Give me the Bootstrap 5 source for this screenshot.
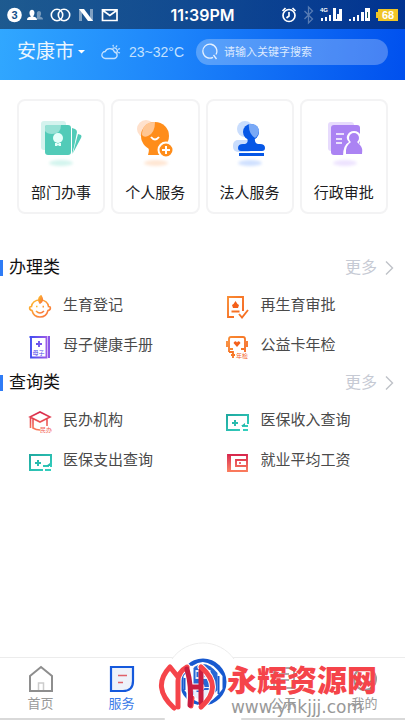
<!DOCTYPE html>
<html lang="zh-CN">
<head>
<meta charset="utf-8">
<meta name="viewport" content="width=device-width, initial-scale=1">
<title>服务</title>
<link href="https://cdn.jsdelivr.net/npm/bootstrap@5.3.0/dist/css/bootstrap.min.css" rel="stylesheet">
<style>
  body { font-family: "Liberation Sans", "Noto Sans CJK SC", sans-serif; background: #fff; color: #1c1c1e; }
  a, a:hover { color: inherit; text-decoration: none; }
  svg { display: block; flex-shrink: 0; }
  .hero { background: linear-gradient(97deg, #31a8ff 0%, #1c83fa 45%, #0050ee 100%); color: #fff; }
  .status-strip { height: 29px; padding: 0 6px 0 7px; background: linear-gradient(90deg, rgba(22,60,100,.72), rgba(0,34,96,.66)); }
  .clock { font-family: Inter, sans-serif; font-size: 16px; font-weight: 600; line-height: 20px; }
  .search-line { height: 51px; padding: 0 17px 6px; }
  .city { font-size: 19px; line-height: 28px; color: #e9f5ff; }
  .weather { font-size: 14px; line-height: 20px; color: #c3e1ff; }
  .search-pill { height: 26px; background: rgba(255,255,255,.27); border-radius: 13px; padding: 0 8px 0 6px; }
  .search-pill input { font-size: 11px; line-height: 16px; color: #fff; outline: 0; min-width: 0; }
  .search-pill input::placeholder { color: #dceaff; opacity: 1; }
  .tiles { padding: 19px 17px 0; gap: 6px; }
  .tile { flex: 1 1 0; height: 115px; border: 2px solid #f3f3f4; border-radius: 8px; font-size: 15px; line-height: 22px; padding-top: 11px; gap: 10px; }
  .groups { padding-top: 36px; }
  .group-head { height: 35px; padding-right: 11px; gap: 6px; }
  .group-head h2 { font-size: 17px; line-height: 24px; font-weight: 400; color: #111; }
  .marker { width: 3px; height: 16px; background: #2f7cf6; }
  .more { font-size: 16px; line-height: 24px; color: #c6cad4; }
  .entries { display: grid; grid-template-columns: 22fr 20fr; padding-left: 28px; }
  .entry { height: 40px; gap: 11px; font-size: 15px; line-height: 22px; color: #4a4a4a; }
  .entry svg { margin-top: 4px; }
  .tabs-bar { border-top: 1px solid #ececec; border-bottom: 2px solid #d9d9d9; background: #fff; }
  .tab-item { flex: 1 1 0; height: 60px; padding-top: 7px; font-size: 13px; line-height: 18px; gap: 1px; color: #999; }
  .tab-item.current { color: #3b7ce8; }
  .hub { position: absolute; left: 50%; bottom: -2px; transform: translateX(-50%); }
  .stamp { position: absolute; left: 39%; bottom: 3px; pointer-events: none; }
  .stamp-name { font-size: 30px; line-height: 36px; font-weight: 900; color: #f5444a; }
  .stamp-url { font-family: "DejaVu Sans", sans-serif; font-size: 17px; line-height: 16px; color: #999; }
</style>
<script src="https://cdn.jsdelivr.net/npm/bootstrap@5.3.0/dist/js/bootstrap.bundle.min.js"></script>
</head>
<body>
<svg width="0" height="0" class="position-absolute" aria-hidden="true">
  <defs>
    <linearGradient id="gOrange" x1="0" y1="0" x2="1" y2="1"><stop offset="0" stop-color="#ffbc2e"/><stop offset="1" stop-color="#f9703e"/></linearGradient>
    <linearGradient id="gViolet" x1="0" y1="0" x2="1" y2="0"><stop offset="0" stop-color="#3c4cf0"/><stop offset="1" stop-color="#9a5ae8"/></linearGradient>
    <linearGradient id="gFire" x1="0" y1="0" x2="1" y2="1"><stop offset="0" stop-color="#f98b32"/><stop offset="1" stop-color="#f4601a"/></linearGradient>
    <linearGradient id="gRed" x1="0" y1="0" x2="0" y2="1"><stop offset="0" stop-color="#d8284c"/><stop offset="1" stop-color="#fa7a5c"/></linearGradient>
    <linearGradient id="gTeal" x1="0" y1="0" x2="1" y2="1"><stop offset="0" stop-color="#1fa9a0"/><stop offset="1" stop-color="#35d0bf"/></linearGradient>
    <filter id="soft" x="-30%" y="-80%" width="160%" height="260%"><feGaussianBlur stdDeviation="1.6"/></filter>
  </defs>
</svg>
<div class="min-vh-100 d-flex flex-column">
  <header class="hero">
    <div class="status-strip d-flex align-items-center justify-content-between position-relative">
      <svg width="114" height="20" viewBox="0 0 114 20" role="img" aria-label="通知">
        <circle cx="7.500" cy="10" r="7.300" fill="#fff"/><text x="7.500" y="14" text-anchor="middle" font-family="Liberation Sans" font-weight="700" font-size="11" fill="#14508c">3</text>
        <g fill="#fff"><path d="M20 15c0-2.400 1.500-2.800 4-3.400-2.400-2.500-1.800-6.800 1-6.800s3.400 4.300 1 6.800c2.500.6 4 1 4 3.400z"/><path opacity=".4" d="M30 14.500h6c0-2-1.400-2.400-3-2.900 1.700-2 1.500-5.600-1-5.600-1.400 0-2.200 1-2.200 2.500z"/></g>
        <g fill="none" stroke="#fff" stroke-width="1.600"><circle cx="50" cy="10" r="5.700"/><circle cx="57" cy="10" r="5.700"/></g>
        <path fill="#fff" opacity=".45" d="M72 4h3v12h-3zM83 4h3v12h-3z"/><path fill="#fff" d="M72 4h5l9 12h-5z"/>
        <path d="M95.500 4.800h14.500v10.700H95.500zM96 5.500l6.800 5 6.800-5" fill="none" stroke="#fff" stroke-width="1.700"/>
      </svg>
      <span class="clock position-absolute start-50 translate-middle-x">11:39PM</span>
      <svg width="118" height="20" viewBox="281 0 118 20" role="img" aria-label="电量 68">
        <g fill="none" stroke="#fff" stroke-width="1.700"><circle cx="289" cy="10.500" r="6"/><path d="M289 7v4l-2.500 2M282.500 6l3-3M292.500 3l3 3"/></g>
        <path d="M304.500 6l8 8-4 4V2l4 4-8 8" fill="none" stroke="#fff" stroke-opacity=".32" stroke-width="1.300"/>
        <text x="320" y="7" font-family="Liberation Sans" font-weight="700" font-size="6" fill="#fff">4G</text>
        <g fill="#fff"><path d="M321 13h2v3h-2zM325 12h2v4h-2zM329 10h2v6h-2zM333 3h3v13h-3zM337 9h2v7h-2zM339 4h3v12h-3zM336 14h4v2h-4z"/><path d="M349 14h2v2h-2zM353 12h2v4h-2zM357 10h2v6h-2zM361 7h3v9h-3zM365 3h5v13h-5z"/></g>
        <path d="M367.500 7v6" stroke="#155" stroke-width="1"/>
        <path d="M378 4h20v12h-20v-3h-2V7h2z" fill="#f0c526"/><text x="388" y="14" text-anchor="middle" font-family="Liberation Sans" font-weight="700" font-size="11" fill="#fff">68</text>
      </svg>
    </div>
    <div class="search-line d-flex align-items-center">
      <button type="button" class="btn p-0 border-0 city d-flex align-items-center">安康市<svg width="7" height="5" viewBox="0 0 7 5" class="ms-1"><path d="M0 1h7L3.500 4.500z" fill="#fff"/></svg></button>
      <svg width="20" height="16" viewBox="0 0 20 16" class="ms-3" fill="none" stroke="#c3e1ff" stroke-width="1.300"><path d="M4.500 14.500a3.500 3.500 0 0 1-.3-7A5 5 0 0 1 13.500 8a3.300 3.300 0 0 1-.2 6.500z"/><path d="M11.500 4.600a3 3 0 0 1 4.200 4.200M12 .8l.4 1.800M16 1.500l-1 1.700M19 4.500l-1.900.9M19 9l-1.800-.7"/></svg>
      <span class="weather ms-2 me-2">23~32°C</span>
      <form class="search-pill d-flex align-items-center flex-grow-1 ms-1" role="search">
        <svg width="18" height="18" viewBox="0 0 18 18" fill="none" stroke="#e4f0ff" stroke-width="1.300"><path d="M11 14.400A7 7 0 1 1 14 11.500M11.500 12l3 4"/></svg>
        <input type="search" class="border-0 bg-transparent p-0 ms-1 flex-grow-1" placeholder="请输入关键字搜索" aria-label="请输入关键字搜索">
      </form>
    </div>
  </header>
  <main class="flex-grow-1">
    <nav class="tiles d-flex" aria-label="服务">
      <a href="#" class="tile d-flex flex-column align-items-center">
        <svg width="50" height="60" viewBox="0 0 50 60"><ellipse cx="25" cy="51" rx="12" ry="3" fill="#d3f4ee" filter="url(#soft)"/><rect x="5" y="9" width="25" height="29" rx="3" fill="#d5f3ee"/><path d="M36 16l3 1q2 1 2 3l-3 15-2 7z" fill="#52cbb8"/><path d="M42 22l3 1q1 1 0 3l-8 15z" fill="#52cbb8"/><rect x="9" y="13" width="26" height="30" rx="3" fill="#52cbb8"/><path d="M10 13h15q0 9-9 9-5 0-7-3v-3q0-3 1-3z" fill="#97e1d5"/><circle cx="22" cy="26" r="5" fill="#e6fffa"/><path d="M19 31h2l1 1 1-1h2v3h-2l-1-1-1 1h-2z" fill="#e6fffa"/></svg>
        <span>部门办事</span></a>
      <a href="#" class="tile d-flex flex-column align-items-center">
        <svg width="50" height="60" viewBox="0 0 50 60"><ellipse cx="26" cy="51" rx="12" ry="3" fill="#ffe6d3" filter="url(#soft)"/><circle cx="16" cy="17" r="9" fill="#ffe1cc"/><circle cx="25" cy="24" r="14" fill="#ff8d1a"/><path d="M17 33q3 4 1 10h16V33z" fill="#ff8d1a"/><path d="M12 23q0-13 13-13 0 11-7 14-4 2-6-1z" fill="#ffc693"/><path d="M21 25q4 5 8 0" fill="none" stroke="#fff" stroke-width="2"/><circle cx="36" cy="38" r="7.500" fill="#ff8d1a" stroke="#fff" stroke-width="2"/><path d="M36 34v8M32 38h8" stroke="#fff" stroke-width="2"/></svg>
        <span>个人服务</span></a>
      <a href="#" class="tile d-flex flex-column align-items-center">
        <svg width="50" height="60" viewBox="0 0 50 60"><ellipse cx="25" cy="51" rx="12" ry="3" fill="#cfe0ff" filter="url(#soft)"/><circle cx="20" cy="17" r="8" fill="#c9ddfd"/><rect x="8" y="28" width="20" height="12" rx="5" fill="#c9ddfd"/><circle cx="26" cy="20" r="8" fill="#0657e6"/><path d="M22 25h8q-1 6 3 7h2q5 0 5 4 0 3-3 3H16q-3 0-3-3 0-4 5-4h2q4-1 2-7z" fill="#0657e6"/><path d="M14 41h25v3H14z" fill="#0657e6"/><path d="M24 12q8-1 10 6 0 5-4 8-7-5-6-14z" fill="#7aa9f6"/></svg>
        <span>法人服务</span></a>
      <a href="#" class="tile d-flex flex-column align-items-center">
        <svg width="50" height="60" viewBox="0 0 50 60"><ellipse cx="26" cy="51" rx="12" ry="3" fill="#ede3fe" filter="url(#soft)"/><rect x="9" y="10" width="26" height="29" rx="3" fill="#e7dbfd"/><rect x="12" y="13" width="29" height="30" rx="3" fill="#ab83f3"/><path d="M17 22h8M17 27h6M17 31h6" stroke="#fff" stroke-width="1.600"/><path d="M30 30q-3-3-2-6 2-5 7-5t7 5q0 4-2 7 4 3 4 13H24q0-11 6-14z" fill="#fff"/><circle cx="35" cy="26" r="5" fill="#ab83f3"/><path d="M32 30h6l3 3q3 3 2 9H27q-1-8 5-12z" fill="#ab83f3"/></svg>
        <span>行政审批</span></a>
    </nav>
    <div class="groups">
    <section>
      <div class="group-head d-flex align-items-center">
        <span class="marker"></span><h2 class="m-0 flex-grow-1">办理类</h2>
        <a href="#" class="more d-flex align-items-center">更多<svg width="9" height="16" viewBox="0 0 9 16" class="ms-2"><path d="M1 1.500l6.500 6.500L1 14.500" fill="none" stroke="#bfc2c8" stroke-width="1.400"/></svg></a>
      </div>
      <div class="entries">
        <a href="#" class="entry d-flex align-items-center"><svg width="24" height="24" viewBox="0 0 24 24" fill="none" stroke="url(#gOrange)" stroke-width="1.600"><path d="M12 5c-5 0-8 3-8.500 6.500C1 11 .8 15 4 15.500c1 4 4 6.500 8 6.500s7-2.500 8-6.500c3.200-.5 3-4.500.5-4C20 8 17 5 12 5z"/><path d="M13 1q-4 3-1 7 4-2 1-7z" fill="#f59b2a"/><path d="M8 11.500h1.500M14.500 11.600H16M8 16q4 4 8 0"/></svg>生育登记</a>
        <a href="#" class="entry d-flex align-items-center"><svg width="24" height="24" viewBox="0 0 24 24" fill="none" stroke="url(#gFire)" stroke-width="1.900"><path d="M9 22H3V2h15v14M6.500 16.500h8"/><path d="M14 19l3 3.500 6-7.500"/><path d="M10.500 6l2 3 1.500 1-1 3H8l-1-3 1.500-1z" fill="#f4601a" stroke="none"/></svg>再生育审批</a>
        <a href="#" class="entry d-flex align-items-center"><svg width="24" height="24" viewBox="0 0 24 24" fill="none" stroke="url(#gViolet)" stroke-width="1.900"><path d="M3 2h15.500v20.500H3zM1.500 2H4M11 6v6M8 9h6"/><path d="M20 1h2v22h-2z" fill="#8a57e8" stroke="none"/><text x="10.500" y="20" text-anchor="middle" font-family="Noto Sans CJK SC" font-size="6" fill="#5148ec" stroke="none">母子</text></svg>母子健康手册</a>
        <a href="#" class="entry d-flex align-items-center"><svg width="24" height="24" viewBox="0 0 24 24" fill="none" stroke="url(#gFire)" stroke-width="1.800"><path d="M4 17V4q0-2 2-2h12q2 0 2 2v12M2 6v6M22 6v6M4 17h4v2M20 14v3"/><path d="M12 12L8.500 8q1.500-3 3.500-.6 2-2.400 3.500.6z" fill="#f4601a" stroke="none"/><path d="M5 14h3M16 14h3M6 20h4M8 18v5"/><text x="17" y="23" text-anchor="middle" font-family="Noto Sans CJK SC" font-size="6" fill="#f4601a" stroke="none">年检</text></svg>公益卡年检</a>
      </div>
    </section>
    <section>
      <div class="group-head d-flex align-items-center">
        <span class="marker"></span><h2 class="m-0 flex-grow-1">查询类</h2>
        <a href="#" class="more d-flex align-items-center">更多<svg width="9" height="16" viewBox="0 0 9 16" class="ms-2"><path d="M1 1.500l6.500 6.500L1 14.500" fill="none" stroke="#bfc2c8" stroke-width="1.400"/></svg></a>
      </div>
      <div class="entries">
        <a href="#" class="entry d-flex align-items-center"><svg width="24" height="24" viewBox="0 0 24 24" fill="none" stroke="url(#gRed)" stroke-width="1.600"><path d="M2 7l10-5 10 5-10 5zM5 9v9q3 2 7 2M19 9v7M2.500 8v10"/><text x="18" y="22" text-anchor="middle" font-family="Noto Sans CJK SC" font-size="6" fill="#f25b50" stroke="none">民办</text></svg>民办机构</a>
        <a href="#" class="entry d-flex align-items-center"><svg width="24" height="24" viewBox="0 0 24 24" fill="none" stroke="url(#gTeal)" stroke-width="2"><path d="M15 20H2V5h21v9M10 10v6M7 13h6M17 16h6M18 20h5"/><path d="M16 16l4-3v3z" fill="#28b9ac" stroke="none"/></svg>医保收入查询</a>
        <a href="#" class="entry d-flex align-items-center"><svg width="24" height="24" viewBox="0 0 24 24" fill="none" stroke="url(#gTeal)" stroke-width="2"><path d="M15 20H2V5h21v12M10 10v6M7 13h6M15 16h6M17 20.100h6"/><path d="M18 16l4-3v3z" fill="#28b9ac" stroke="none"/></svg>医保支出查询</a>
        <a href="#" class="entry d-flex align-items-center"><svg width="24" height="24" viewBox="0 0 24 24" fill="none" stroke="url(#gRed)" stroke-width="1.900"><path d="M3 5h19v16H3zM5 5v16M22 10H11v6h11z"/><circle cx="15" cy="13" r="1" fill="#e23e50" stroke="none"/></svg>就业平均工资</a>
      </div>
    </section>
    </div>
  </main>
  <footer class="tabs-bar position-sticky bottom-0">
    <nav class="d-flex" aria-label="主导航">
      <a href="#" class="tab-item d-flex flex-column align-items-center"><svg width="28" height="29" viewBox="0 0 28 29"><path d="M3 11L14 2l11 9v15H3z" fill="none" stroke="#8e8e8e" stroke-width="2"/><path d="M11.500 25v-7h5v7" fill="none" stroke="#ccc" stroke-width="1.500"/></svg>首页</a>
      <a href="#" class="tab-item current d-flex flex-column align-items-center" aria-current="page"><svg width="28" height="29" viewBox="0 0 28 29"><path d="M3 2h22v14q0 10-10 10H3z" fill="#eef2fa" stroke="#1559dc" stroke-width="2.200"/><path d="M10 10.500h9M10 17.500h5" stroke="#e0616a" stroke-width="1.500"/></svg>服务</a>
      <span class="tab-item"></span>
      <a href="#" class="tab-item d-flex flex-column align-items-center"><svg width="28" height="29" viewBox="0 0 28 29" fill="none" stroke="#aaa" stroke-width="2"><path d="M4 3h20v20H4zM9 9h10M9 15h10"/></svg>公示</a>
      <a href="#" class="tab-item d-flex flex-column align-items-center"><svg width="28" height="29" viewBox="0 0 28 29" fill="none" stroke="#999" stroke-width="2"><circle cx="14" cy="14" r="11"/><path d="M8 16q6 6 12 0"/></svg>我的</a>
    </nav>
    <a href="#" class="hub" aria-label="办事大厅"><svg width="77" height="78" viewBox="0 0 77 78"><path d="M0 78V39a38 38 0 0 1 77 0v39z" fill="#fff"/><path d="M7.500 17a38 38 0 0 1 62 0" fill="none" stroke="#ececec"/><circle cx="38.500" cy="40" r="23.500" fill="#1759cf"/><path d="M19 34q19-28 39 0v13q-19 28-39 0z" fill="#fff"/><path d="M20 36v12M24 32v20M54 34v18" stroke="#1759cf" stroke-width="2"/><path d="M24 31q14-18 29 0v17q-14 18-29 0z" fill="#2767d4"/><path d="M31 28h15v9H31zM29 45h19v9q-9 8-19 0z" fill="#e8effc"/><path d="M33 30v5M37 30v5M41 30v5M32 49h5l2-2h6" stroke="#2767d4" stroke-width="2" fill="none"/></svg></a>
    <div class="stamp d-flex align-items-start">
      <svg width="69" height="50" viewBox="158 661 69 50" fill="none" stroke-linecap="round" stroke-linejoin="round"><g stroke="#fff" stroke-width="7"><path d="M174 706q-23-21-4-41l8 10M187 665q-9 5-9 14v26M190 667v37M190 685h11M201 665q23 20 0 40"/></g><g stroke="#f5444a" stroke-width="5"><path d="M174 706q-23-21-4-41l8 10M187 665q-9 5-9 14v26M191 704l1-8"/></g><g stroke="#c81d40" stroke-width="5"><path d="M187 667q5 18 3 36M191 685h10M201 668v33"/></g><path d="M201 665q23 20 0 40" stroke="#f5444a" stroke-width="5"/></svg>
      <div class="d-flex flex-column"><span class="stamp-name">永辉资源网</span><span class="stamp-url ps-1">www.yhkjjj.com</span></div>
    </div>
  </footer>
</div>
</body>
</html>
